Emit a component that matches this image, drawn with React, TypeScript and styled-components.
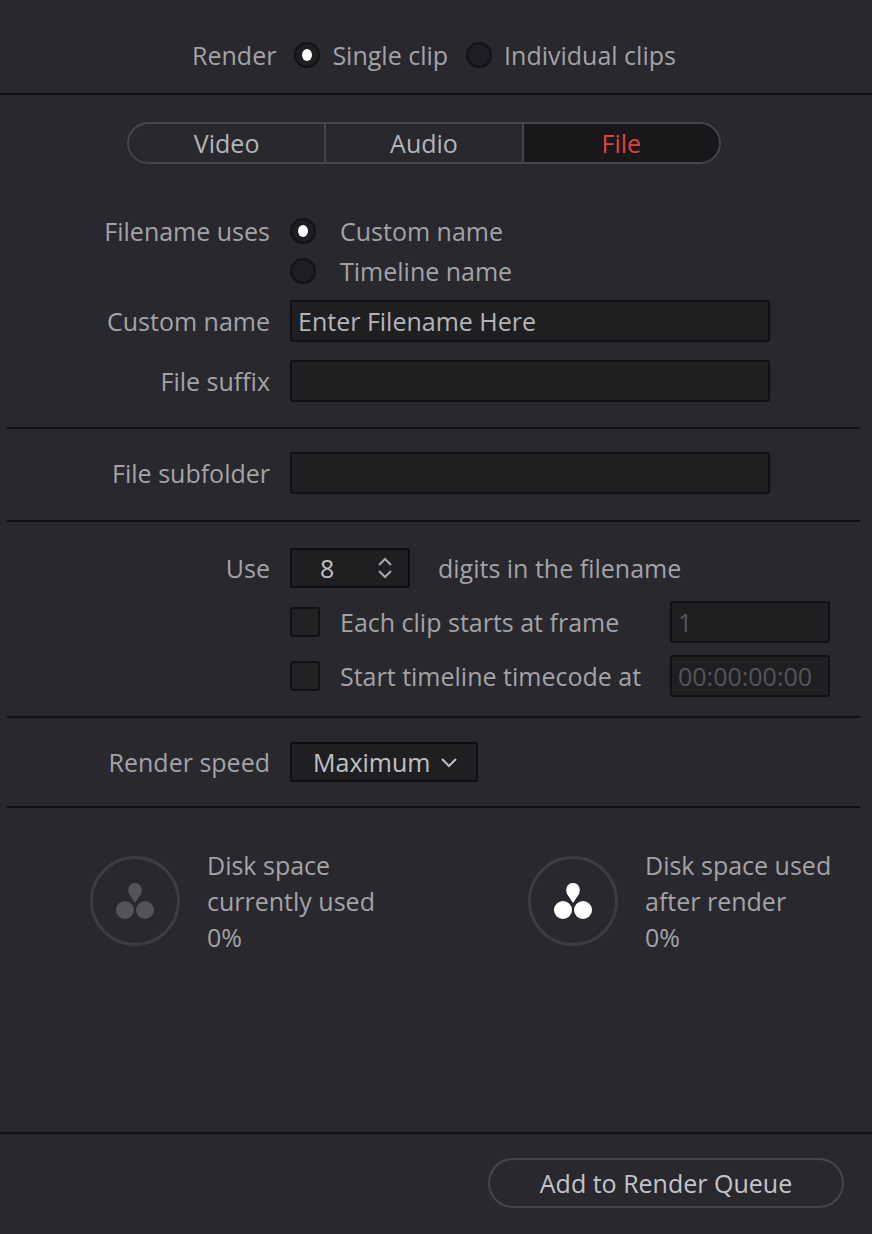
import { FC } from "react";
import styled, { createGlobalStyle } from "styled-components";

const Global = createGlobalStyle`
  html, body { margin: 0; padding: 0; background: #28282e; }
  body { font-family: "Open Sans", "Noto Sans", sans-serif; color: #a3a3a6; }
`;

const Page = styled.div`
  width: 872px;
  height: 1234px;
  display: flex;
  flex-direction: column;
  background: #28282e;
  font-size: 25px;
`;

const TopRow = styled.div`
  height: 95px;
  box-sizing: border-box;
  padding: 16px 0 0 2px;
  display: flex;
  align-items: center;
  justify-content: center;
  gap: 12px;
  border-bottom: 2px solid #0e0e10;
`;

const Radio = styled.span<{ $on?: boolean }>`
  width: 26px;
  height: 26px;
  border-radius: 50%;
  box-sizing: border-box;
  border: 2px solid #121214;
  background: #1e1e21;
  display: inline-flex;
  align-items: center;
  justify-content: center;
  flex: none;
  &::after {
    content: "";
    width: 10px;
    height: 12px;
    border-radius: 50%;
    background: #fff;
    display: ${({ $on }) => ($on ? "block" : "none")};
  }
`;

const RadioLabel = styled.span`
  margin-right: 6px;
`;

const Tabs = styled.div`
  margin: 27px 0 0 127px;
  width: 594px;
  height: 42px;
  box-sizing: border-box;
  border: 2px solid #45454b;
  border-radius: 21px;
  display: flex;
  overflow: hidden;
`;

const Tab = styled.div<{ $active?: boolean }>`
  flex: 1;
  display: flex;
  align-items: center;
  justify-content: center;
  color: ${({ $active }) => ($active ? "#e0423b" : "#b4b4b8")};
  background: ${({ $active }) => ($active ? "#18181b" : "transparent")};
  & + & { border-left: 2px solid #45454b; }
`;

const Section = styled.div<{ $pt: number; $pb: number }>`
  margin: 0 12px 0 7px;
  padding: ${({ $pt }) => $pt}px 0 ${({ $pb }) => $pb}px;
  display: flex;
  flex-direction: column;
  border-bottom: 2px solid #111113;
`;

const Row = styled.div<{ $h: number; $mt?: number }>`
  display: grid;
  grid-template-columns: 263px auto;
  column-gap: 20px;
  height: ${({ $h }) => $h}px;
  margin-top: ${({ $mt }) => $mt ?? 0}px;
  align-items: center;
`;

const Label = styled.div`
  text-align: right;
  white-space: nowrap;
`;

const Controls = styled.div<{ $gap?: number }>`
  display: flex;
  align-items: center;
  gap: ${({ $gap }) => $gap ?? 20}px;
  white-space: nowrap;
`;

const TextBox = styled.div<{ $w?: number; $dim?: boolean }>`
  width: ${({ $w }) => $w ?? 480}px;
  height: 42px;
  box-sizing: border-box;
  border: 2px solid #111113;
  border-radius: 3px;
  background: #1f1f22;
  display: flex;
  align-items: center;
  padding-left: 6px;
  color: ${({ $dim }) => ($dim ? "#55555a" : "#b4b4b8")};
`;

const Spin = styled.div`
  width: 120px;
  height: 40px;
  box-sizing: border-box;
  border: 2px solid #0e0e10;
  border-radius: 3px;
  background: #1f1f22;
  display: flex;
  align-items: center;
  justify-content: space-between;
  padding: 0 14px 0 28px;
  color: #c0c0c4;
  margin-right: 8px;
`;

const Check = styled.span`
  width: 30px;
  height: 30px;
  box-sizing: border-box;
  border: 2px solid #111113;
  border-radius: 3px;
  background: #222225;
  flex: none;
`;

const CheckText = styled.span`
  width: 310px;
`;

const Select = styled.div`
  height: 40px;
  box-sizing: border-box;
  border: 2px solid #0e0e10;
  border-radius: 3px;
  background: #1f1f22;
  display: flex;
  align-items: center;
  gap: 10px;
  padding: 0 18px 0 21px;
  color: #c0c0c4;
`;

const Disk = styled.div`
  flex: 1;
  display: flex;
  padding: 39px 0 0 90px;
  gap: 138px;
`;

const DiskItem = styled.div<{ $w: number }>`
  display: flex;
  gap: 27px;
  line-height: 36px;
  width: ${({ $w }) => $w}px;
  white-space: nowrap;
`;

const Circle = styled.div`
  margin-top: 9px;
  width: 90px;
  height: 90px;
  flex: none;
  box-sizing: border-box;
  border: 3px solid #3c3c42;
  border-radius: 50%;
  display: flex;
  align-items: center;
  justify-content: center;
`;

const Footer = styled.div`
  height: 100px;
  border-top: 2px solid #111113;
  display: flex;
  justify-content: flex-end;
  align-items: center;
  padding-right: 28px;
`;

const QueueButton = styled.div`
  width: 356px;
  height: 50px;
  box-sizing: border-box;
  border: 2px solid #45454b;
  border-radius: 25px;
  display: flex;
  align-items: center;
  justify-content: center;
  color: #c4c4c8;
  margin-top: -2px;
`;

const Logo: FC<{ color: string }> = ({ color }) => (
  <svg width="44" height="44" viewBox="0 0 44 44">
    <path d="M22 4 C28 4 30 10 28 15 L22 24 L16 15 C14 10 16 4 22 4Z" fill={color} />
    <circle cx="12" cy="31" r="9" fill={color} />
    <circle cx="32" cy="31" r="9" fill={color} />
  </svg>
);

const App: FC = () => (
  <Page>
    <Global />
    <TopRow>
      <RadioLabel>Render</RadioLabel>
      <Radio $on />
      <RadioLabel>Single clip</RadioLabel>
      <Radio />
      <RadioLabel>Individual clips</RadioLabel>
    </TopRow>
    <Tabs>
      <Tab>Video</Tab>
      <Tab>Audio</Tab>
      <Tab $active>File</Tab>
    </Tabs>
    <Section $pt={47} $pb={16}>
      <Row $h={40}>
        <Label>Filename uses</Label>
        <Controls $gap={24}><Radio $on />Custom name</Controls>
      </Row>
      <Row $h={40}>
        <Label />
        <Controls $gap={24}><Radio />Timeline name</Controls>
      </Row>
      <Row $h={60}>
        <Label>Custom name</Label>
        <TextBox>Enter Filename Here</TextBox>
      </Row>
      <Row $h={60}>
        <Label>File suffix</Label>
        <TextBox />
      </Row>
    </Section>
    <Section $pt={21} $pb={24}>
      <Row $h={46}>
        <Label>File subfolder</Label>
        <TextBox />
      </Row>
    </Section>
    <Section $pt={24} $pb={13}>
      <Row $h={44}>
        <Label>Use</Label>
        <Controls>
          <Spin>
            8
            <svg width="18" height="24" viewBox="0 0 18 24" fill="none" stroke="#a8a8ac" strokeWidth="2">
              <path d="M3 9 L9 3 L15 9" />
              <path d="M3 15 L9 21 L15 15" />
            </svg>
          </Spin>
          digits in the filename
        </Controls>
      </Row>
      <Row $h={54} $mt={5}>
        <Label />
        <Controls><Check /><CheckText>Each clip starts at frame</CheckText><TextBox $w={160} $dim>1</TextBox></Controls>
      </Row>
      <Row $h={54}>
        <Label />
        <Controls><Check /><CheckText>Start timeline timecode at</CheckText><TextBox $w={160} $dim>00:00:00:00</TextBox></Controls>
      </Row>
    </Section>
    <Section $pt={22} $pb={22}>
      <Row $h={44}>
        <Label>Render speed</Label>
        <Controls>
          <Select>
            Maximum
            <svg width="18" height="12" viewBox="0 0 18 12" fill="none" stroke="#c0c0c4" strokeWidth="2">
              <path d="M2 3 L9 10 L16 3" />
            </svg>
          </Select>
        </Controls>
      </Row>
    </Section>
    <Disk>
      <DiskItem $w={300}>
        <Circle><Logo color="#535358" /></Circle>
        <div>Disk space<br />currently used<br />0%</div>
      </DiskItem>
      <DiskItem $w={320}>
        <Circle><Logo color="#ffffff" /></Circle>
        <div>Disk space used<br />after render<br />0%</div>
      </DiskItem>
    </Disk>
    <Footer>
      <QueueButton>Add to Render Queue</QueueButton>
    </Footer>
  </Page>
);

export default App;
